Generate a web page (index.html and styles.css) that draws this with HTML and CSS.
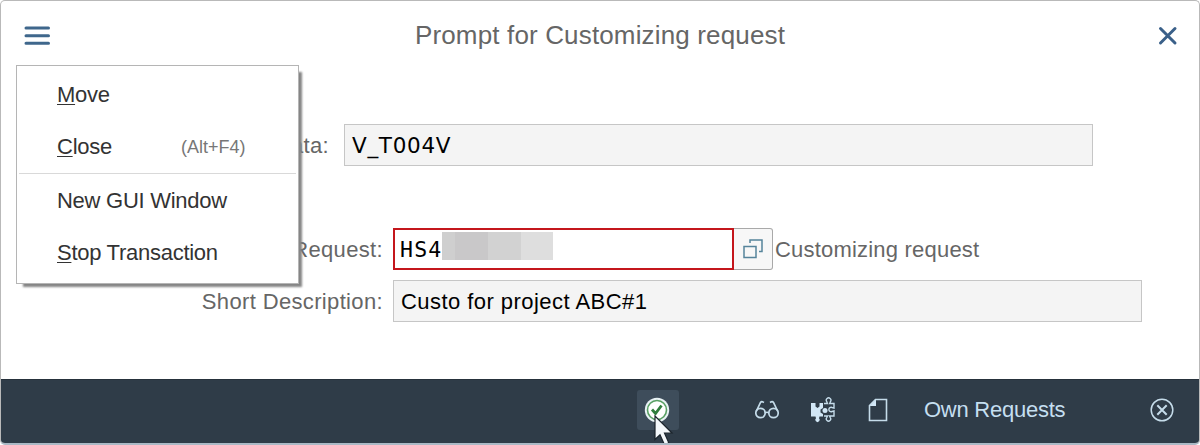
FILE: index.html
```html
<!DOCTYPE html>
<html lang="en">
<head>
    <meta charset="UTF-8">
    <title>Prompt for Customizing request</title>
    <link rel="stylesheet" href="styles.css">
</head>
<body>
    <div class="dialog">
        <header class="titlebar">
            <button class="icon-btn" aria-label="Menu">
                <svg width="28" height="20" viewBox="0 0 28 20"><path d="M3 2h22.500M3 9.700h22.500M3 17.300h22.500" stroke="#3f678c" stroke-width="3" stroke-linecap="round"/></svg>
            </button>
            <h1>Prompt for Customizing request</h1>
            <button class="icon-btn" aria-label="Close">
                <svg width="20" height="20" viewBox="0 0 20 20"><path d="M2.500 2.500l14.500 14.500M17 2.500L2.500 17" stroke="#3a6089" stroke-width="3" stroke-linecap="round"/></svg>
            </button>
        </header>

        <main class="form">
            <div class="row row-data">
                <label>Data:</label>
                <div class="field readonly code">V_T004V</div>
            </div>
            <div class="row row-request">
                <label>Request:</label>
                <div class="field required mono">HS4<span class="masked"></span></div>
                <button class="value-help" aria-label="Value help">
                    <svg width="20" height="20" viewBox="0 0 20 20" fill="none" stroke="#56849b" stroke-width="1.500"><path d="M1 7.500h12v11H1zM7 4V1h12v11.500h-3"/></svg>
                </button>
                <span class="hint">Customizing request</span>
            </div>
            <div class="row row-desc">
                <label>Short Description:</label>
                <div class="field readonly desc">Custo for project ABC#1</div>
            </div>
        </main>

        <footer class="toolbar">
            <button class="tool active" aria-label="Continue">
                <svg width="26" height="26" viewBox="0 0 26 26" fill="none"><circle cx="13" cy="13" r="12.200" fill="#e9f2f5"/><circle cx="13" cy="13" r="9.500" fill="#fff" stroke="#59a064" stroke-width="1.600"/><path d="M8 12.500l3.500 4 6-8" stroke="#2f7d3c" stroke-width="2.800"/></svg>
            </button>
            <button class="tool glasses" aria-label="Display">
                <svg width="24" height="20" viewBox="0 0 24 20" fill="none" stroke="#c5dcea" stroke-width="1.700"><circle cx="5.500" cy="13" r="4.700"/><circle cx="18.500" cy="13" r="4.700"/><path d="M10 13q2-1.500 4 0M1.200 11.500L5.500 2.500Q6.500 1 9 2.500M22.800 11.500L18.500 2.500Q17.500 1 15 2.500"/></svg>
            </button>
            <button class="tool puzzle" aria-label="Components">
                <svg width="26" height="26" viewBox="0 0 26 26"><path d="M1 6h4.500v3.500l2 1.500 2-1.500V6H13v5l-2.500 1.500v3L13 17v2.500H9.500l-.5 1.700a2.200 2.200 0 1 1-3 0L5.500 19.500H1z" fill="#d2e7f6"/><path d="M14 6.500h3.500l-.8-2a2.300 2.300 0 1 1 3.800 0l-.8 2H24v4.500l-2-.5a2.200 2.200 0 1 0 0 4l2-.5v5h-4.500l.8 1.600a2.200 2.200 0 1 1-3.600 0l.8-1.600H14" fill="none" stroke="#c5dcea" stroke-width="1.400"/><circle cx="15" cy="13.500" r="2.500" fill="#d2e7f6"/></svg>
            </button>
            <button class="tool page" aria-label="Create">
                <svg width="20" height="24" viewBox="0 0 20 24"><path d="M7.500 1.500H18.500v21H1.500V7.500z" fill="none" stroke="#c5dcea" stroke-width="1.600"/><path d="M8 1.500V8H1.500z" fill="#d2e7f6"/></svg>
            </button>
            <button class="own">Own Requests</button>
            <button class="tool cancel" aria-label="Cancel">
                <svg width="24" height="24" viewBox="0 0 24 24" fill="none" stroke="#c5dcea"><circle cx="12" cy="12" r="10.800" stroke-width="1.500"/><path d="M7.300 7.300l9.400 9.400M16.700 7.300l-9.400 9.400" stroke-width="2"/></svg>
            </button>
        </footer>

        <div class="menu">
            <div class="item"><span><u>M</u>ove</span></div>
            <div class="item"><span><u>C</u>lose</span><span class="key">(Alt+F4)</span></div>
            <hr>
            <div class="item"><span>New GUI Window</span></div>
            <div class="item"><span><u>S</u>top Transaction</span></div>
        </div>

        <svg class="cursor" width="20" height="31" viewBox="0 0 20 31"><path d="M1 1v23.500l5-4.700 4.500 10 4.300-2-4.300-9.600 7.500-.2z" fill="#f4f8fb" stroke="#1b242c" stroke-width="1.200"/></svg>
    </div>
</body>
</html>
```
FILE: styles.css
```css
* {
    box-sizing: border-box;
}
body {
    margin: 0;
    background: #fff;
    font-family: "Liberation Sans", Arial, sans-serif;
    font-size: 22px;
    color: #666;
}
button {
    border: none;
    background: none;
    padding: 0;
    font: inherit;
}
svg {
    display: block;
    fill: none;
}
.dialog {
    position: relative;
    display: flex;
    flex-direction: column;
    height: 445px;
    border: 1px solid #b9b9b9;
    border-bottom: 2px solid #aab9c5;
    border-radius: 5px;
    overflow: hidden;
}
.titlebar {
    display: flex;
    align-items: center;
    height: 66px;
    padding: 3px 21px 0 22px;
}
.titlebar h1 {
    flex: 1;
    margin: 0;
    padding-right: 9px;
    font-size: 26px;
    font-weight: normal;
    letter-spacing: 0.15px;
    text-align: center;
}

/* form */
.form {
    flex: 1;
    padding-top: 57px;
}
.row {
    display: flex;
    align-items: center;
}
.row label {
    width: 382px;
    margin-right: 10px;
    padding-top: 1px;
    text-align: right;
    letter-spacing: 0.35px;
}
.row-data label {
    width: 328px;
    margin-right: 15px;
}
.row-request {
    margin-top: 62px;
}
.row-desc {
    margin-top: 10px;
}
.field {
    display: flex;
    align-items: center;
    width: 749px;
    height: 42px;
    padding-left: 7px;
    border: 1px solid #c6c6c6;
    background: #f4f4f4;
    color: #000;
}
.code {
    font-family: "DejaVu Sans", sans-serif;
    font-size: 21.5px;
    letter-spacing: 0.7px;
}
.mono {
    font-family: "DejaVu Sans Mono", monospace;
    font-size: 21.5px;
    letter-spacing: 1.2px;
}
.desc {
    padding-top: 1px;
    letter-spacing: 0.45px;
}
.required {
    width: 341px;
    padding-left: 5px;
    border: 2px solid #c4161c;
    background: #fff;
}
.masked {
    width: 111px;
    height: 28px;
    margin-bottom: 6px;
    background: linear-gradient(90deg, #cfcfcf 13px, #c9c8c9 13px 46px, #d2d2d2 46px 79px, #dedede 79px);
}
.value-help {
    display: flex;
    align-items: center;
    justify-content: center;
    width: 39px;
    height: 42px;
    border: 1px solid #a9a9a9;
    border-left: none;
    border-radius: 0 3px 3px 0;
    background: #f7f7f7;
}
.hint {
    margin-left: 2px;
    padding-top: 1px;
    letter-spacing: 0.2px;
}

/* toolbar */
.toolbar {
    display: flex;
    align-items: center;
    height: 64px;
    padding: 0 0 4px 636px;
    background: #2f3c48;
    border-top: 1px solid #26313b;
}
.tool {
    display: flex;
    align-items: center;
    justify-content: center;
}
.active {
    width: 42px;
    height: 40px;
    padding-right: 2px;
    border-radius: 3px;
    background: #3e4d5b;
}
.glasses {
    margin-left: 76px;
}
.puzzle {
    margin-left: 31px;
}
.page {
    margin-left: 32px;
}
.own {
    margin-left: 36px;
    color: #c5dff0;
    letter-spacing: -0.25px;
}
.cancel {
    margin-left: 85px;
}

/* system menu */
.menu {
    position: absolute;
    left: 15px;
    top: 64px;
    width: 283px;
    height: 219px;
    padding-top: 3px;
    border: 1px solid #b5b5b5;
    background: #fff;
    box-shadow: 5px 5px 2px -2px #858585;
    color: #333;
}
.item {
    display: flex;
    align-items: center;
    height: 52px;
    padding-left: 40px;
    letter-spacing: -0.27px;
}
.item u {
    text-decoration-thickness: 1px;
    text-underline-offset: 2px;
}
.key {
    margin-left: 69px;
    font-size: 18px;
    letter-spacing: 0;
    color: #777;
}
.menu hr {
    height: 1px;
    margin: 0 2px 1px;
    border: none;
    background: #d9d9d9;
}
.cursor {
    position: absolute;
    left: 653px;
    top: 414px;
}
```
